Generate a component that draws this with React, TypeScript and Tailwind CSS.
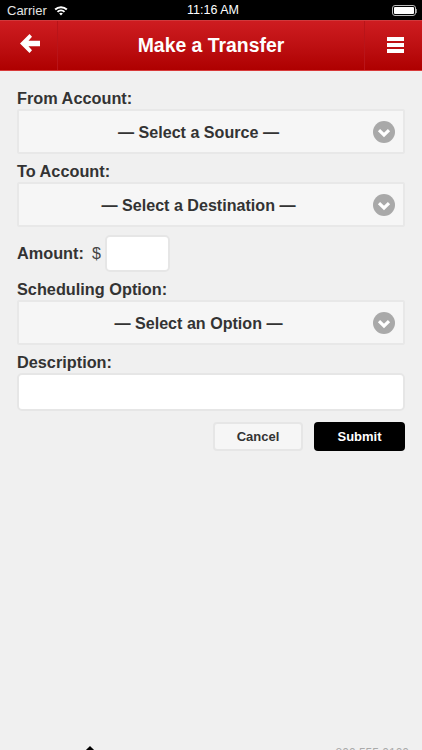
const font = { fontFamily: '"Liberation Sans", Arial, sans-serif' };

function Chevron() {
  return (
    <svg width="22" height="22" viewBox="0 0 22 22" className="shrink-0">
      <circle cx="11" cy="11" r="11" fill="#a9a9a9" />
      <path d="M6 9.2 L11 14 L16 9.2" fill="none" stroke="#fff" strokeWidth="3.2" />
    </svg>
  );
}

function SelectBox({ text }: { text: string }) {
  return (
    <div className="relative flex h-[45px] items-center justify-center rounded-[2px] border-2 border-[#e8e8e8] bg-[#f6f6f6] pr-[25px] pt-[1px] text-[16.1px] font-bold text-[#333]">
      <span>{text}</span>
      <div className="absolute right-[8px] top-[10px] flex">
        <Chevron />
      </div>
    </div>
  );
}

function Label({ text }: { text: string }) {
  return <div className="text-[16.3px] font-bold leading-[18px] text-[#333]">{text}</div>;
}

export default function App() {
  return (
    <div className="flex h-[750px] w-[422px] flex-col overflow-hidden bg-[#f0f0f0]" style={font}>
      <div className="flex h-[20px] shrink-0 items-center justify-between bg-black pl-[7px] pr-[5px] pt-[1px] text-white">
        <div className="flex w-[80px] items-center gap-[7px] text-[13px]">
          <span className="text-[#e5e5e5]">Carrier</span>
          <svg width="14" height="11" viewBox="0 0 15 11">
            <path d="M0.5 3.7 A10 10 0 0 1 14.5 3.7 L13 5.2 A8 8 0 0 0 2 5.2 Z" fill="#fff" />
            <path d="M3 6.2 A6.3 6.3 0 0 1 12 6.2 L10.5 7.7 A4.3 4.3 0 0 0 4.5 7.7 Z" fill="#fff" />
            <path d="M5.5 8.7 A3 3 0 0 1 9.5 8.7 L7.5 10.8 Z" fill="#fff" />
          </svg>
        </div>
        <span className="text-[12.5px]">11:16 AM</span>
        <div className="flex w-[78px] justify-end">
          <div className="flex items-center">
            <div className="h-[11px] w-[24px] rounded-[3px] border border-[#bbb] p-[1px]">
              <div className="h-full w-full rounded-[1px] bg-white" />
            </div>
            <div className="h-[4px] w-[1px] bg-[#888]" />
          </div>
        </div>
      </div>

      <div className="flex h-[51px] shrink-0 items-stretch border-t border-b border-t-[#d0393c] border-b-[#d83a3a] bg-gradient-to-b from-[#ce1c20] to-[#ae0000]">
        <div className="flex w-[58px] shrink-0 items-center justify-center border-r border-[#b91419] pb-[5px] pl-[2px]">
          <svg width="20" height="19" viewBox="0 0 20 19">
            <path d="M9.5 0 L0 9.5 L9.5 19 L12 16.3 L8.5 12.3 H20 V6.7 H8.5 L12 2.7 Z" fill="#fff" />
          </svg>
        </div>
        <div className="flex flex-1 items-center justify-center text-[19.4px] font-bold text-white">Make a Transfer</div>
        <div className="flex w-[58px] shrink-0 items-center justify-center border-l border-[#b91419] pb-[2px] pl-[3px]">
          <div className="flex w-[17px] flex-col gap-[2px]">
            <div className="h-[4px] bg-white" />
            <div className="h-[4px] bg-white" />
            <div className="h-[4px] bg-white" />
          </div>
        </div>
      </div>

      <div className="flex flex-1 flex-col px-[17px] pt-[18px]">
        <Label text="From Account:" />
        <div className="mt-[2px]">
          <SelectBox text="— Select a Source —" />
        </div>
        <div className="mt-[8px]">
          <Label text="To Account:" />
        </div>
        <div className="mt-[2px]">
          <SelectBox text="— Select a Destination —" />
        </div>
        <div className="mt-[8px] flex items-center">
          <span className="text-[16.3px] font-bold text-[#333]">Amount:</span>
          <span className="ml-[8px] text-[16px] text-[#444]">$</span>
          <div className="ml-[4px] h-[37px] w-[65px] rounded-[5px] border-2 border-[#e6e6e6] bg-white" />
        </div>
        <div className="mt-[8px]">
          <Label text="Scheduling Option:" />
        </div>
        <div className="mt-[2px]">
          <SelectBox text="— Select an Option —" />
        </div>
        <div className="mt-[8px]">
          <Label text="Description:" />
        </div>
        <div className="mt-[2px] h-[38px] rounded-[5px] border-2 border-[#e6e6e6] bg-white" />
        <div className="mt-[11px] flex justify-end gap-[11px]">
          <div className="flex h-[29px] w-[90px] items-center justify-center rounded-[4px] border-2 border-[#e6e6e6] bg-[#f6f6f6] text-[13px] font-bold text-[#333]">Cancel</div>
          <div className="flex h-[29px] w-[91px] items-center justify-center rounded-[4px] bg-black text-[13px] font-bold text-white">Submit</div>
        </div>
        <div className="flex-1" />
        <div className="relative -mx-[17px] h-[4px]">
          <div className="absolute left-[85px] top-[2px] h-[10px] w-[10px] rotate-45 bg-black" />
          <div className="absolute right-[13px] top-0 text-[12px] leading-[14px] text-[#aaa]">800.555.0100</div>
        </div>
      </div>
    </div>
  );
}
